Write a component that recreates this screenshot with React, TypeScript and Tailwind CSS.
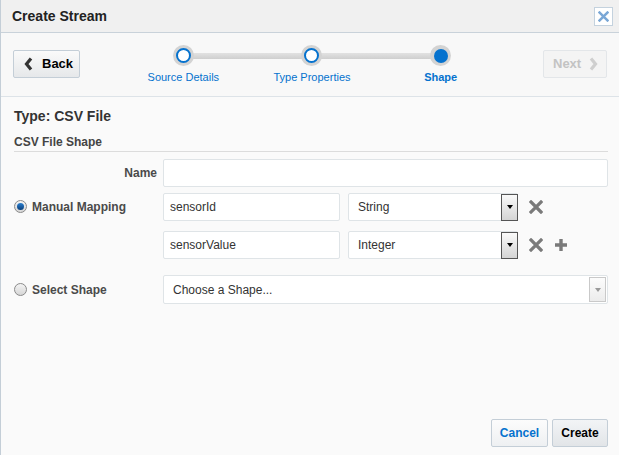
import React from "react";

const font = { fontFamily: '"Liberation Sans", Arial, sans-serif' };

const XIcon = ({ color = "#7a7a7a", size = 14 }: { color?: string; size?: number }) => (
  <svg width={size} height={size} viewBox="0 0 14 14">
    <path d="M2 2 L12 12 M12 2 L2 12" stroke={color} strokeWidth="3.2" strokeLinecap="square" />
  </svg>
);

const PlusIcon = () => (
  <svg width="14" height="14" viewBox="0 0 14 14">
    <path d="M7 1 V13 M1 7 H13" stroke="#7a7a7a" strokeWidth="3.4" />
  </svg>
);

const Chevron = ({ dir, color }: { dir: "left" | "right"; color: string }) => (
  <svg width="9" height="14" viewBox="0 0 9 14">
    {dir === "left" ? (
      <path d="M7 1.5 L2.5 7 L7 12.5" stroke={color} strokeWidth="3.2" fill="none" />
    ) : (
      <path d="M2 1.5 L6.5 7 L2 12.5" stroke={color} strokeWidth="3.2" fill="none" />
    )}
  </svg>
);

const Radio = ({ checked }: { checked?: boolean }) => (
  <span className="w-[13px] h-[13px] rounded-full border border-[#8a8a8a] bg-gradient-to-b from-[#f4f4f4] to-[#d6d6d6] flex items-center justify-center shrink-0">
    {checked && <span className="w-[7px] h-[7px] rounded-full bg-gradient-to-b from-[#2a7fd0] to-[#0a3f7a]" />}
  </span>
);

const TextField = ({ value, w }: { value?: string; w: string }) => (
  <div className={`${w} h-[28px] bg-white border border-[#dfe4e7] rounded-[2px] flex items-center px-[6px] text-[12px] text-[#333]`}>
    {value}
  </div>
);

const Select = ({ value }: { value: string }) => (
  <div className="w-[170px] h-[28px] bg-white border border-[#dfe4e7] rounded-[2px] flex items-center pl-[9px] text-[12px] text-[#333]">
    <span className="flex-1">{value}</span>
    <span className="w-[17px] h-[27px] border border-[#555] bg-gradient-to-b from-[#fafafa] to-[#d4d4d4] flex items-center justify-center -mr-px">
      <span className="w-0 h-0 border-l-[3.5px] border-r-[3.5px] border-t-[4px] border-l-transparent border-r-transparent border-t-black" />
    </span>
  </div>
);

const steps = [
  { label: "Source Details", state: "done" },
  { label: "Type Properties", state: "done" },
  { label: "Shape", state: "current" },
];

export default function App() {
  return (
    <div style={font} className="w-[619px] h-[455px] flex flex-col border-l border-[#c4ced7] bg-[#fafafa] text-[#333] overflow-hidden">
      {/* Header */}
      <div className="h-[33px] shrink-0 flex items-center justify-between pl-[11px] pr-[6px] bg-[#f0f0f0] border-b border-[#c9d2da]">
        <span className="text-[14px] font-bold text-[#222]">Create Stream</span>
        <span className="w-[19px] h-[19px] border border-[#c4d2de] bg-white flex items-center justify-center">
          <XIcon color="#7aa7d6" size={11} />
        </span>
      </div>

      {/* Train */}
      <div className="h-[64px] shrink-0 flex items-start pl-[12px] pr-[12px] border-b border-[#dde3e8] bg-[#f8f8f8]">
        <div className="mt-[17px] w-[67px] h-[28px] border border-[#c4ced7] rounded-[2px] bg-gradient-to-b from-[#fafafa] to-[#e6e8ea] flex items-center gap-[9px] pl-[10px] text-[13px] font-bold text-black">
          <Chevron dir="left" color="#333" />
          Back
        </div>
        <div className="ml-[39px] mt-[12px] relative grid grid-cols-3 w-[386px]">
          <div className="absolute left-[64px] right-[64px] top-[8px] h-[6px] bg-gradient-to-b from-[#e2e2e2] to-[#cfcfcf]" />
          {steps.map((s) => (
            <div key={s.label} className="relative flex flex-col items-center">
              <span className="w-[21px] h-[21px] rounded-full bg-[#d3d3d3] flex items-center justify-center">
                {s.state === "current" ? (
                  <span className="w-[14px] h-[14px] rounded-full bg-[#0572ce]" />
                ) : (
                  <span className="w-[15px] h-[15px] rounded-full bg-white border-2 border-[#0572ce]" />
                )}
              </span>
              <span className={`mt-[3px] text-[11px] text-[#0572ce] ${s.state === "current" ? "font-bold" : ""}`}>
                {s.label}
              </span>
            </div>
          ))}
        </div>
        <div className="ml-auto mt-[17px] w-[64px] h-[28px] border border-[#e3e6e9] rounded-[2px] bg-[#f4f4f4] flex items-center gap-[8px] pl-[9px] text-[13px] font-bold text-[#c3c3c3]">
          Next
          <Chevron dir="right" color="#cfcfcf" />
        </div>
      </div>

      {/* Body */}
      <div className="flex-1 flex flex-col pl-[13px] pr-[11px]">
        <div className="mt-[11px] text-[14px] leading-[16px] font-bold text-[#333]">Type: CSV File</div>
        <div className="mt-[11px] pb-[2px] border-b border-[#dcdcdc] text-[12px] leading-[14px] font-bold text-[#444]">CSV File Shape</div>

        <div className="mt-[7px] flex items-center">
          <span className="w-[143px] text-right text-[12px] font-bold text-[#4a4a4a]">Name</span>
          <div className="ml-[6px] flex-1 h-[28px] bg-white border border-[#dfe4e7] rounded-[2px]" />
        </div>

        <div className="mt-[6px] flex items-start">
          <div className="w-[149px] h-[27px] flex items-center gap-[5px]">
            <Radio checked />
            <span className="text-[12px] font-bold text-[#4a4a4a]">Manual Mapping</span>
          </div>
          <div className="flex flex-col gap-[10px]">
            <div className="flex items-center">
              <TextField w="w-[177px]" value="sensorId" />
              <div className="ml-[8px]"><Select value="String" /></div>
              <span className="ml-[11px]"><XIcon /></span>
            </div>
            <div className="flex items-center">
              <TextField w="w-[177px]" value="sensorValue" />
              <div className="ml-[8px]"><Select value="Integer" /></div>
              <span className="ml-[11px]"><XIcon /></span>
              <span className="ml-[11px]"><PlusIcon /></span>
            </div>
          </div>
        </div>

        <div className="mt-[16px] flex items-center">
          <div className="w-[149px] flex items-center gap-[5px]">
            <Radio />
            <span className="text-[12px] font-bold text-[#4a4a4a]">Select Shape</span>
          </div>
          <div className="flex-1 h-[29px] bg-white border border-[#dfe4e7] rounded-[2px] flex items-center pl-[9px] pr-[1px] text-[12px] text-[#333]">
            <span className="flex-1">Choose a Shape...</span>
            <span className="w-[17px] h-[25px] border border-[#c9c9c9] bg-gradient-to-b from-[#fcfcfc] to-[#ececec] flex items-center justify-center">
              <span className="w-0 h-0 border-l-[3.5px] border-r-[3.5px] border-t-[4px] border-l-transparent border-r-transparent border-t-[#9a9a9a]" />
            </span>
          </div>
        </div>

        <div className="mt-auto mb-[8px] flex justify-end gap-[4px]">
          <div className="w-[57px] h-[28px] border border-[#c4ced7] rounded-[2px] bg-gradient-to-b from-[#fcfcfc] to-[#eef0f2] flex items-center justify-center text-[12px] font-bold text-[#0572ce]">
            Cancel
          </div>
          <div className="w-[56px] h-[28px] border border-[#c4ced7] rounded-[2px] bg-gradient-to-b from-[#f2f4f6] to-[#e2e5e8] flex items-center justify-center text-[12px] font-bold text-black">
            Create
          </div>
        </div>
      </div>
    </div>
  );
}
